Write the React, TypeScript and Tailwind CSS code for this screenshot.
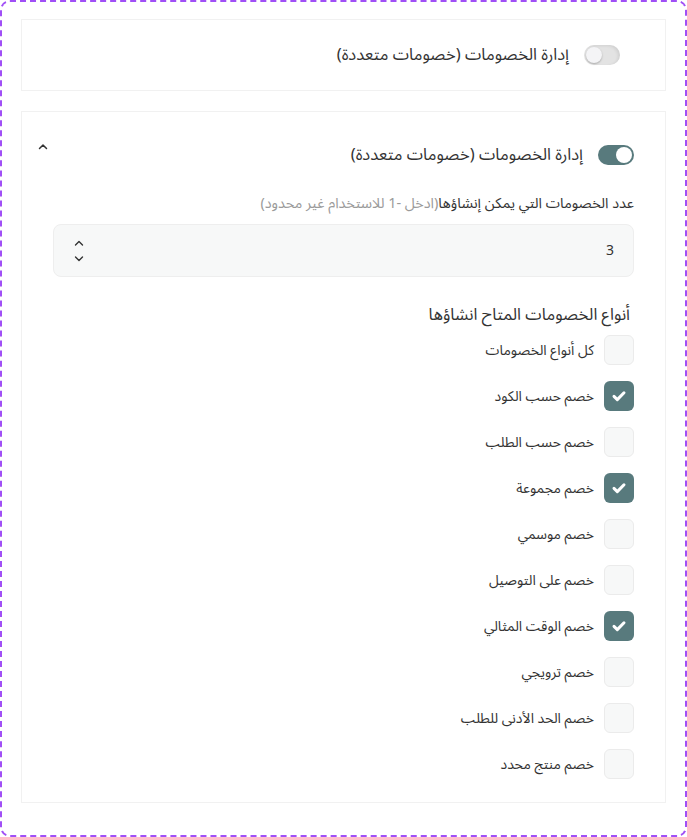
import React from "react";

const items: { label: string; checked: boolean }[] = [
  { label: "كل أنواع الخصومات", checked: false },
  { label: "خصم حسب الكود", checked: true },
  { label: "خصم حسب الطلب", checked: false },
  { label: "خصم مجموعة", checked: true },
  { label: "خصم موسمي", checked: false },
  { label: "خصم على التوصيل", checked: false },
  { label: "خصم الوقت المثالي", checked: true },
  { label: "خصم ترويجي", checked: false },
  { label: "خصم الحد الأدنى للطلب", checked: false },
  { label: "خصم منتج محدد", checked: false },
];

function Check() {
  return (
    <svg width="18" height="18" viewBox="0 0 18 18" fill="none">
      <path d="M4 9.4l3.3 3.2L14 5.8" stroke="white" strokeWidth="3" strokeLinecap="round" strokeLinejoin="round" />
    </svg>
  );
}

export default function App() {
  return (
    <div
      dir="rtl"
      className="w-[687px] h-[837px] bg-white text-[#333] rounded-[10px] border-2 border-dashed border-[#a04ff6] px-[19px] pt-[17px]"
      style={{ fontFamily: '"Noto Sans Arabic", "DejaVu Sans", "Noto Sans", sans-serif' }}
    >
      <div className="border border-[#f1f1f1] h-[72px] flex items-center pr-[45px] gap-[15px]">
        <div dir="ltr" className="w-[36px] h-[20px] rounded-full bg-[#e3e3e3] shadow-[inset_-2px_1px_3px_rgba(0,0,0,0.08)] flex items-center justify-start pl-[2px]">
          <div className="w-[16px] h-[16px] rounded-full bg-[#f4f4f6] shadow-[0_1px_2px_rgba(0,0,0,0.25)]" />
        </div>
        <span className="text-[16.5px] text-[#333] leading-[20px]">إدارة الخصومات (خصومات متعددة)</span>
      </div>

      <div className="mt-[20px] border border-[#f1f1f1] h-[692px] px-[31px] pt-[30px]">
        <div className="flex items-center justify-between h-[26px]">
          <div className="flex items-center gap-[15px]">
            <div dir="ltr" className="w-[36px] h-[20px] rounded-full bg-[#587a7d] flex items-center justify-end pr-[2px]">
              <div className="w-[16px] h-[16px] rounded-full bg-white" />
            </div>
            <span className="text-[16.5px] text-[#333] leading-[20px]">إدارة الخصومات (خصومات متعددة)</span>
          </div>
          <svg width="12" height="12" viewBox="0 0 12 12" fill="none" className="ml-[-16px] mt-[-16px]">
            <path d="M2.5 7.5L6 4l3.5 3.5" stroke="#333" strokeWidth="1.5" strokeLinecap="round" strokeLinejoin="round" />
          </svg>
        </div>

        <div className="mt-[26px] text-[14.4px] leading-[20px]">
          <span className="text-[#333]">عدد الخصومات التي يمكن إنشاؤها</span>
          <span className="text-[#9a9a9a]">(ادخل -1 للاستخدام غير محدود)</span>
        </div>

        <div className="mt-[10px] h-[53px] rounded-[8px] bg-[#f7f8f8] border border-[#eeeeee] flex items-center justify-between pr-[19px] pl-[19px]">
          <span className="text-[14px] text-[#333]">3</span>
          <svg width="12" height="26" viewBox="0 0 12 26" fill="none">
            <path d="M2.5 7L6 3.5 9.5 7" stroke="#333" strokeWidth="1.4" strokeLinecap="round" strokeLinejoin="round" />
            <path d="M2.5 19L6 22.5 9.5 19" stroke="#333" strokeWidth="1.4" strokeLinecap="round" strokeLinejoin="round" />
          </svg>
        </div>

        <div className="mt-[26px] pr-[4px] text-[16.5px] text-[#333] leading-[24px]">أنواع الخصومات المتاح انشاؤها</div>

        <div className="mt-[8px] flex flex-col gap-[16px]">
          {items.map((it) => (
            <div key={it.label} className="flex items-center gap-[10px]">
              {it.checked ? (
                <div className="w-[30px] h-[30px] rounded-[6px] bg-[#587a7d] flex items-center justify-center">
                  <Check />
                </div>
              ) : (
                <div className="w-[30px] h-[30px] rounded-[6px] bg-[#f7f8f8] border border-[#ebebeb]" />
              )}
              <span className="text-[14px] text-[#333]">{it.label}</span>
            </div>
          ))}
        </div>
      </div>
    </div>
  );
}
